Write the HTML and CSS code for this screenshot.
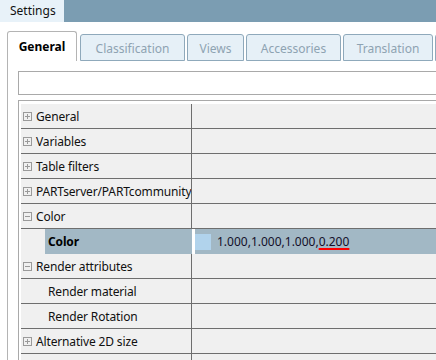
FILE: index.html
```html
<!DOCTYPE html>
<html lang="en">
<head>
  <meta charset="UTF-8">
  <title>Settings</title>
  <link rel="stylesheet" href="styles.css">
</head>
<body>
  <div class="titlebar">
    <div class="doc-tab">Settings</div>
  </div>

  <div class="tabstrip">
    <div class="tab active">General</div>
    <div class="tab w-class">Classification</div>
    <div class="tab w-views">Views</div>
    <div class="tab w-acc">Accessories</div>
    <div class="tab w-trans">Translation</div>
    <div class="tab w-more"></div>
  </div>

  <div class="panel">
    <div class="search"></div>

    <div class="grid">
      <div class="row">
        <div class="name"><svg class="exp" viewBox="0 0 9 9"><rect x="0.5" y="0.5" width="8" height="8"/><path d="M2 4.5h5M4.5 2v5"/></svg>General</div>
        <div class="value"></div>
      </div>
      <div class="row">
        <div class="name"><svg class="exp" viewBox="0 0 9 9"><rect x="0.5" y="0.5" width="8" height="8"/><path d="M2 4.5h5M4.5 2v5"/></svg>Variables</div>
        <div class="value"></div>
      </div>
      <div class="row">
        <div class="name"><svg class="exp" viewBox="0 0 9 9"><rect x="0.5" y="0.5" width="8" height="8"/><path d="M2 4.5h5M4.5 2v5"/></svg>Table filters</div>
        <div class="value"></div>
      </div>
      <div class="row">
        <div class="name"><svg class="exp" viewBox="0 0 9 9"><rect x="0.5" y="0.5" width="8" height="8"/><path d="M2 4.5h5M4.5 2v5"/></svg>PARTserver/PARTcommunity</div>
        <div class="value"></div>
      </div>
      <div class="row">
        <div class="name"><svg class="exp" viewBox="0 0 9 9"><rect x="0.5" y="0.5" width="8" height="8"/><path d="M2 4.5h5"/></svg>Color</div>
        <div class="value"></div>
      </div>
      <div class="row selected">
        <div class="name child"><span class="label">Color</span></div>
        <div class="value">
          <span class="swatch"></span>
          <span class="val-text">1.000,1.000,1.000,<span class="err">0.200</span></span>
        </div>
      </div>
      <div class="row">
        <div class="name"><svg class="exp" viewBox="0 0 9 9"><rect x="0.5" y="0.5" width="8" height="8"/><path d="M2 4.5h5"/></svg>Render attributes</div>
        <div class="value"></div>
      </div>
      <div class="row">
        <div class="name child"><span class="label">Render material</span></div>
        <div class="value"></div>
      </div>
      <div class="row">
        <div class="name child"><span class="label">Render Rotation</span></div>
        <div class="value"></div>
      </div>
      <div class="row">
        <div class="name"><svg class="exp" viewBox="0 0 9 9"><rect x="0.5" y="0.5" width="8" height="8"/><path d="M2 4.5h5M4.5 2v5"/></svg>Alternative 2D size</div>
        <div class="value"></div>
      </div>
      <div class="row">
        <div class="name"></div>
        <div class="value"></div>
      </div>
    </div>
  </div>
</body>
</html>
```

FILE: styles.css
```css
body {
  margin: 0;
  width: 436px;
  height: 360px;
  overflow: hidden;
  background: #ffffff;
  font-family: 'Noto Sans', 'Open Sans', sans-serif;
  font-size: 12px;
  color: #111111;
}

.titlebar {
  height: 22px;
  background: #7b9db2;
}

.doc-tab {
  width: 64px;
  height: 22px;
  box-sizing: border-box;
  padding-left: 10px;
  line-height: 22px;
  background: #e8f2f9;
  color: #111111;
}

/* tabs */
.tabstrip {
  display: flex;
  align-items: flex-end;
  padding: 9px 0 0 7px;
  height: 30px;
  white-space: nowrap;
  overflow: hidden;
}

.tab {
  flex: none;
  box-sizing: border-box;
  height: 27px;
  margin-right: 2px;
  padding-top: 2px;
  border: 1px solid #8fa9bb;
  border-radius: 3px 3px 0 0;
  background: #e6f0f7;
  color: #8ea3b2;
  text-align: center;
  line-height: 23px;
}

.tab.active {
  width: 70px;
  height: 30px;
  margin-right: 3px;
  padding-top: 0;
  border-color: #b4b4b4;
  border-bottom: none;
  background: #ffffff;
  color: #000000;
  font-weight: bold;
  line-height: 30px;
}

.w-class { width: 105px; }
.w-views { width: 57px; }
.w-acc { width: 95px; }
.w-trans { width: 90px; }
.w-more { width: 20px; }

/* panel */
.panel {
  margin-left: 7px;
  height: 299px;
  overflow: hidden;
  border-left: 1px solid #b4b4b4;
  padding: 10px 0 0 10px;
}

.search {
  height: 24px;
  box-sizing: border-box;
  border: 1px solid #a9a9a9;
  border-right: none;
}

.grid {
  margin-top: 5px;
  border-top: 1px solid #a9a9a9;
  border-left: 1px solid #a9a9a9;
  padding: 3px 0 0 2px;
}

.row {
  display: grid;
  grid-template-columns: 171px 1fr;
  height: 25px;
  box-sizing: border-box;
  border-bottom: 1px solid #6e6e6e;
  background: #f0f0f0;
}

.name {
  display: flex;
  align-items: center;
  box-sizing: border-box;
  padding-left: 2px;
  border-right: 1px solid #6e6e6e;
  white-space: nowrap;
  overflow: hidden;
  letter-spacing: -0.15px;
}

.exp {
  flex: none;
  width: 9px;
  height: 9px;
  margin-right: 4px;
  fill: none;
  stroke: #9a9a9a;
  stroke-width: 1;
  shape-rendering: crispEdges;
}

.name.child {
  padding-left: 24px;
  align-items: stretch;
}

.label {
  display: flex;
  align-items: center;
  flex: 1;
  padding-left: 3px;
}

.value {
  display: flex;
  align-items: center;
}

/* selected row */
.row.selected {
  border-bottom: none;
}

.selected .name {
  border-right-color: #a2b8c5;
}

.selected .label {
  background: #a2b8c5;
  font-weight: bold;
  color: #000000;
}

.selected .value {
  background: #a2b8c5;
  border-left: 3px solid #ffffff;
}

.swatch {
  width: 16px;
  height: 16px;
  margin-right: 6px;
  background: #b1d3ec;
}

.val-text {
  color: #14102a;
}

.err {
  text-decoration: underline;
  text-decoration-color: #ff0000;
  text-decoration-thickness: 2px;
  text-underline-offset: 2px;
}
```
